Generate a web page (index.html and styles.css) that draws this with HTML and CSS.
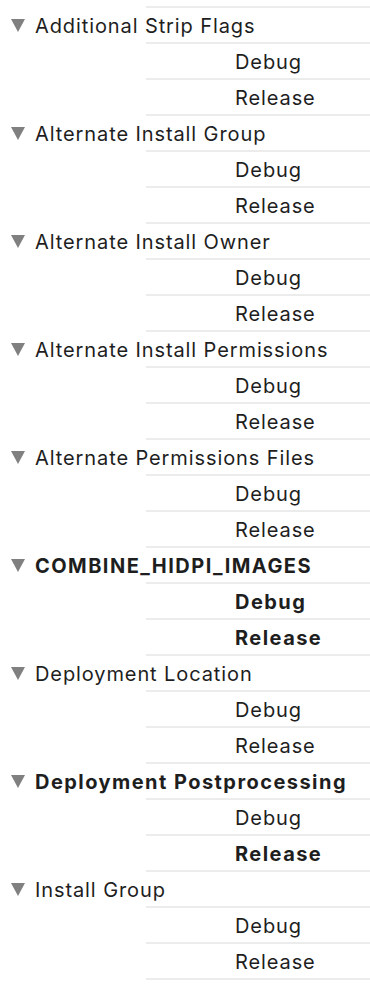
FILE: index.html
```html
<!DOCTYPE html>
<html lang="en">
<head>
  <meta charset="UTF-8">
  <title>Build Settings</title>
  <link rel="stylesheet" href="styles.css">
</head>
<body>
  <div class="settings" id="settings"></div>
  <div class="row end"></div>

  <script>
    const settings = [
      { name: "Additional Strip Flags" },
      { name: "Alternate Install Group" },
      { name: "Alternate Install Owner" },
      { name: "Alternate Install Permissions" },
      { name: "Alternate Permissions Files" },
      { name: "COMBINE_HIDPI_IMAGES", bold: true, debug: true, release: true },
      { name: "Deployment Location" },
      { name: "Deployment Postprocessing", bold: true, release: true },
      { name: "Install Group" }
    ];

    const list = document.getElementById("settings");
    settings.forEach((s) => {
      const group = document.createElement("div");
      group.className = "group";
      group.innerHTML = `
        <div class="row header${s.bold ? ' modified' : ''}">
          <span class="disclosure"></span>
          <span class="label">${s.name}</span>
        </div>
        <div class="row config${s.debug ? ' modified' : ''}"><span class="label">Debug</span></div>
        <div class="row config${s.release ? ' modified' : ''}"><span class="label">Release</span></div>`;
      list.appendChild(group);
    });
  </script>
</body>
</html>
```

FILE: styles.css
```css
body {
  margin: 0;
  padding-top: 6px;
  background: #ffffff;
  font-family: Inter, 'Noto Sans', sans-serif;
  color: #1e1e1e;
}
.row {
  box-sizing: border-box;
  height: 36px;
  padding-top: 4px;
  display: flex;
  align-items: center;
  font-size: 20px;
  letter-spacing: 0.9px;
  background: linear-gradient(#ececec, #ececec) 146px 0 / calc(100% - 146px) 2px no-repeat;
}
.row.end {
  height: 8px;
}
.header {
  padding-left: 11px;
  gap: 10px;
}
.config {
  padding-left: 235px;
}
.modified .label {
  font-weight: 700;
  letter-spacing: 1.45px;
}
.disclosure {
  width: 0;
  height: 0;
  border-left: 7px solid transparent;
  border-right: 7px solid transparent;
  border-top: 13px solid #808080;
  margin-top: -1px;
}
```
